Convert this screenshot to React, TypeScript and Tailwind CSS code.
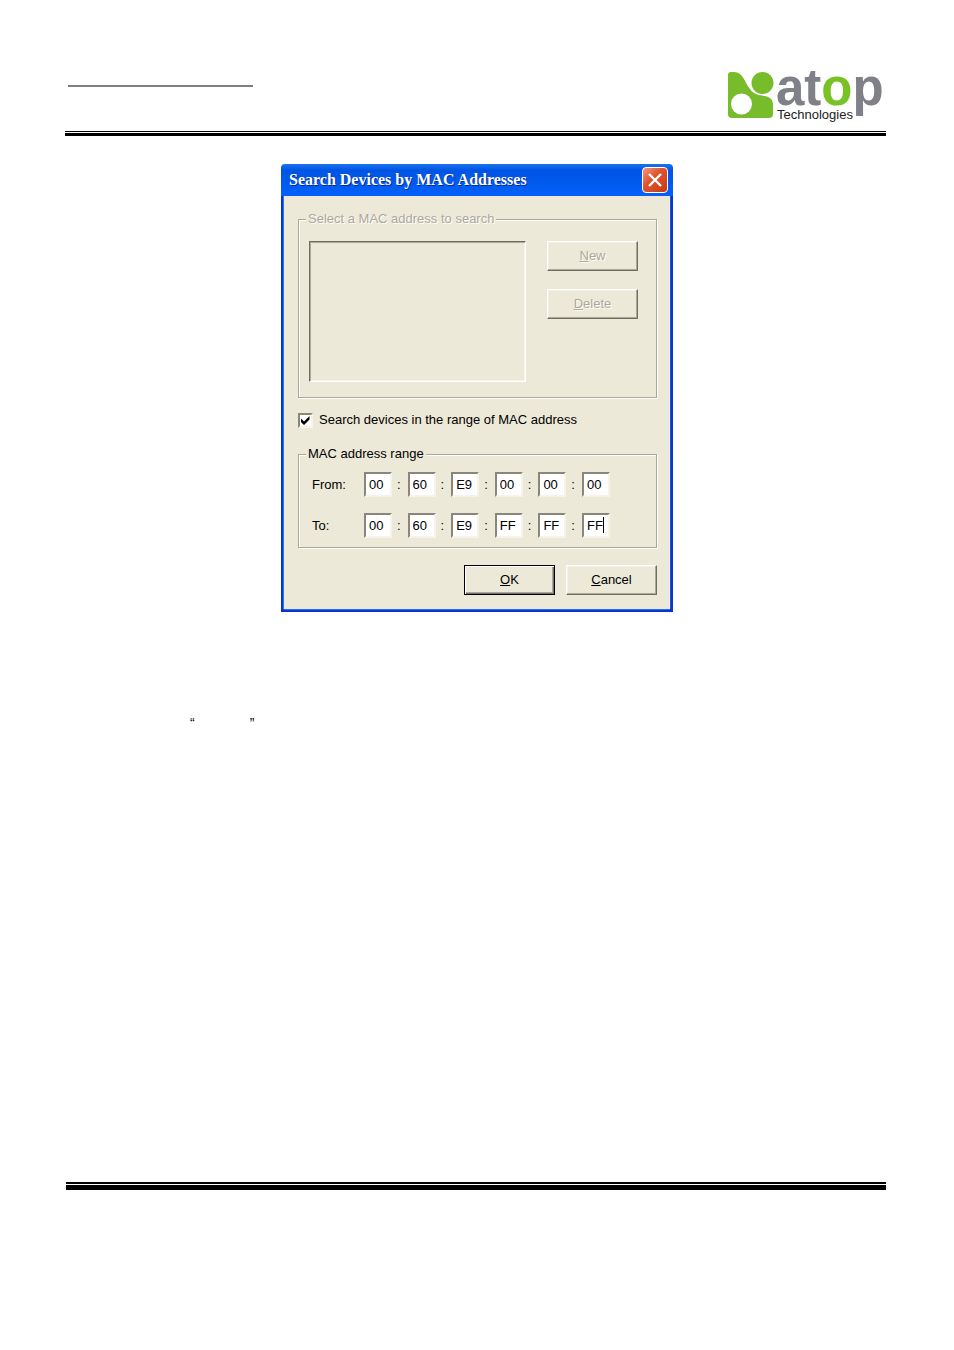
import { Fragment } from 'react'

const ranges = [
  { id: 'from', label: 'From:', values: ['00', '60', 'E9', '00', '00', '00'], active: -1 },
  { id: 'to', label: 'To:', values: ['00', '60', 'E9', 'FF', 'FF', 'FF'], active: 5 },
]

const raised =
  'border border-t-white border-l-white border-r-[#716f64] border-b-[#716f64] shadow-[inset_-1px_-1px_0_#aca899,inset_1px_1px_0_#f4f2e8]'

const groupBox =
  'min-w-0 border border-[#aca899] pl-[7px] shadow-[1px_1px_0_#fff,inset_1px_1px_0_#fff]'

function Logo() {
  return (
    <svg viewBox="0 0 158 56" className="h-14 w-[158px] overflow-visible" role="img" aria-label="atop Technologies">
      <path
        d="M3 7H6C15 7 17 18 22 24C27 31 33 30 39 31.500Q45 33.500 45 39V49Q45 53 41 53H4Q0 53 0 49V10Q0 7 3 7Z"
        fill="#76bc2b"
      />
      <circle cx="34.500" cy="18" r="12" fill="#fff" />
      <circle cx="34.500" cy="18" r="11" fill="#76bc2b" />
      <circle cx="13.500" cy="39" r="10.500" fill="#fff" />
      <text x="48" y="40" fill="#808088" className="font-['Liberation_Sans',sans-serif] text-[51px] font-bold">
        at<tspan fill="#78c225">o</tspan>p
      </text>
      <text x="49" y="54" fill="#222" className="font-['Liberation_Sans',sans-serif] text-[13px]">
        Technologies
      </text>
    </svg>
  )
}

function TitleBar() {
  return (
    <div className="flex h-8 items-center justify-between rounded-t-sm bg-linear-to-b from-[#1b73ee] via-[#0054e3] via-20% to-[#0261fb] pr-[5px] pl-2">
      <h1 className="font-['Liberation_Serif',serif] text-[16px] leading-5 font-bold whitespace-nowrap text-white [text-shadow:1px_1px_0_#0a2a8c]">
        Search Devices by MAC Addresses
      </h1>
      <button
        type="button"
        aria-label="Close"
        className="flex size-[26px] items-center justify-center rounded border border-white bg-linear-to-br from-[#f09a80] via-[#e1542f] via-40% to-[#c63a10]"
      >
        <svg viewBox="0 0 16 16" className="size-4" fill="none" stroke="#fff" strokeWidth="2.400">
          <path d="M2 2L14 14M14 2L2 14" />
        </svg>
      </button>
    </div>
  )
}

export default function App() {
  return (
    <div className="flex min-h-screen flex-col bg-white font-['Liberation_Sans',sans-serif] text-[13px] leading-5 text-black">
      <header className="pt-[65px] pr-[68px] pl-[65px]">
        <div className="flex h-[66px] items-start justify-between pl-[3px]">
          <div className="mt-5 h-0.5 w-[185px] bg-[#808080]" />
          <Logo />
        </div>
        <div className="h-px bg-black" />
        <div className="mt-px h-[3px] bg-black" />
      </header>

      <main className="mt-7">
        <section className="mx-auto w-full max-w-[392px] rounded-t-md bg-[#0636cf]">
          <TitleBar />
          <form className="mx-[3px] bg-[#ece9d8] pt-[13px] pr-[13px] pb-3.5 pl-3.5 shadow-[-1px_0_0_#2b7af5,0_1px_0_#2b6ff0,1px_0_0_#1c55e0]">
            <fieldset disabled className={`${groupBox} pb-[15px]`}>
              <legend className="bg-[#ece9d8] px-0.5 text-[#aca899] [text-shadow:1px_1px_0_#fff]">
                Select a MAC address to search
              </legend>
              <div className="flex gap-[21px] pt-3 pl-[3px]">
                <select
                  multiple
                  aria-label="MAC addresses"
                  className="h-[141px] w-[217px] appearance-none border border-t-[#716f64] border-r-white border-b-white border-l-[#716f64] bg-[#ece9d8] shadow-[inset_1px_1px_0_#aca899,inset_-1px_-1px_0_#f6f4ea]"
                />
                <div className="flex flex-col gap-[18px]">
                  <button type="button" className={`${raised} h-[30px] w-[91px] text-[#aca899] [text-shadow:1px_1px_0_#fff]`}>
                    <u>N</u>ew
                  </button>
                  <button type="button" className={`${raised} h-[30px] w-[91px] text-[#aca899] [text-shadow:1px_1px_0_#fff]`}>
                    <u>D</u>elete
                  </button>
                </div>
              </div>
            </fieldset>

            <label className="mt-3 flex items-center gap-[6px]">
              <span className="relative size-[15px]">
                <input
                  type="checkbox"
                  defaultChecked
                  className="peer block size-[15px] appearance-none border-2 border-t-[#8a877a] border-r-[#f6f4ea] border-b-[#f6f4ea] border-l-[#8a877a] bg-white"
                />
                <svg
                  viewBox="0 0 15 15"
                  className="pointer-events-none absolute inset-0 hidden size-[15px] peer-checked:block"
                >
                  <path d="M3 5.500L6 8.500L11.500 3V6.500L6 12L3 9Z" fill="#000" />
                </svg>
              </span>
              Search devices in the range of MAC address
            </label>

            <fieldset className={`${groupBox} mt-3.5 pb-[9px]`}>
              <legend className="bg-[#ece9d8] px-0.5">MAC address range</legend>
              <div className="flex flex-col gap-4 pt-2 pl-1.5">
                {ranges.map((row) => (
                  <div key={row.id} className="flex items-center">
                    <label htmlFor={`${row.id}-0`} className="w-[52px]">
                      {row.label}
                    </label>
                    <div className="flex w-[246px] items-center justify-between">
                      {row.values.map((value, i) => (
                        <Fragment key={i}>
                          {i > 0 && <span className="pr-0.5">:</span>}
                          <span className="relative">
                            <input
                              id={`${row.id}-${i}`}
                              aria-label={i > 0 ? `${row.label} ${i + 1}` : undefined}
                              defaultValue={value}
                              maxLength={2}
                              className="block h-[25px] w-7 border-2 border-t-[#8a877a] border-r-[#f6f4ea] border-b-[#f6f4ea] border-l-[#8a877a] bg-white pl-[3px] outline-none"
                            />
                            {row.active === i && <span className="absolute top-1 right-[6px] h-4 w-px bg-black" />}
                          </span>
                        </Fragment>
                      ))}
                    </div>
                  </div>
                ))}
              </div>
            </fieldset>

            <div className="mt-[17px] flex justify-end gap-[11px]">
              <button
                type="submit"
                className="h-[30px] w-[91px] border border-black shadow-[inset_1px_1px_0_#fff,inset_-1px_-1px_0_#716f64,inset_-2px_-2px_0_#aca899]"
              >
                <u>O</u>K
              </button>
              <button type="button" className={`${raised} h-[30px] w-[91px]`}>
                <u>C</u>ancel
              </button>
            </div>
          </form>
          <div className="h-[3px]" />
        </section>

        <p className="mt-[101px] flex gap-[55px] pl-[190px] text-[14px]">
          <span>“</span>
          <span>”</span>
        </p>
      </main>

      <footer className="mt-auto pr-[68px] pb-40 pl-[66px]">
        <div className="h-0.5 bg-black" />
        <div className="mt-px h-[5px] bg-black" />
      </footer>
    </div>
  )
}
